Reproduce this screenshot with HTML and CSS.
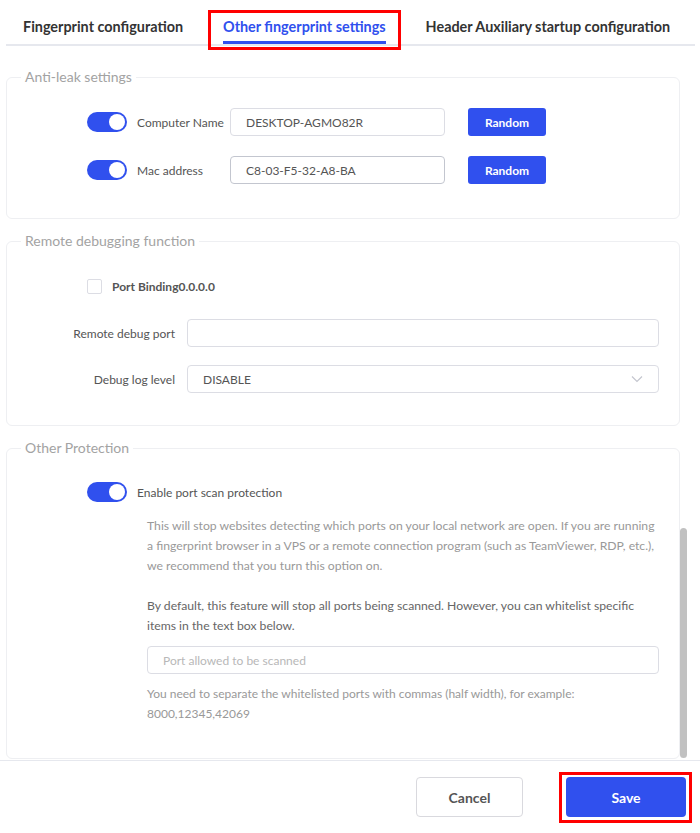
FILE: index.html
```html
<!DOCTYPE html>
<html>
<head>
    <link rel="stylesheet" href="styles.css">
</head>
<body>
    <div class="tabs">
        <div class="tab">Fingerprint configuration</div>
        <div class="tab active">Other fingerprint settings</div>
        <div class="tab">Header Auxiliary startup configuration</div>
    </div>

    <div class="content">
        <div class="sections">
            <fieldset class="group group-leak">
                <legend>Anti-leak settings</legend>
                <div class="leak-row">
                    <span class="switch"></span>
                    <label class="leak-label">Computer Name</label>
                    <input class="text-input leak-input" type="text" value="DESKTOP-AGMO82R">
                    <button class="btn-random">Random</button>
                </div>
                <div class="leak-row">
                    <span class="switch"></span>
                    <label class="leak-label">Mac address</label>
                    <input class="text-input leak-input dark" type="text" value="C8-03-F5-32-A8-BA">
                    <button class="btn-random">Random</button>
                </div>
            </fieldset>

            <fieldset class="group group-debug">
                <legend>Remote debugging function</legend>
                <div class="check-row">
                    <span class="checkbox"></span>
                    <label class="check-label">Port Binding0.0.0.0</label>
                </div>
                <div class="form-row">
                    <label class="form-label">Remote debug port</label>
                    <input class="text-input wide" type="text">
                </div>
                <div class="form-row">
                    <label class="form-label">Debug log level</label>
                    <div class="text-input wide select">
                        <span>DISABLE</span>
                        <svg width="12" height="8" viewBox="0 0 12 8"><path d="M1 1.5 L6 6.5 L11 1.5" fill="none" stroke="#c4c6cf" stroke-width="1.2"/></svg>
                    </div>
                </div>
            </fieldset>

            <fieldset class="group group-other">
                <legend>Other Protection</legend>
                <div class="leak-row">
                    <span class="switch"></span>
                    <label class="leak-label">Enable port scan protection</label>
                </div>
                <div class="protect-body">
                    <p class="hint">This will stop websites detecting which ports on your local network are open. If you are running<br>a fingerprint browser in a VPS or a remote connection program (such as TeamViewer, RDP, etc.),<br>we recommend that you turn this option on.</p>
                    <p class="hint dark">By default, this feature will stop all ports being scanned. However, you can whitelist specific<br>items in the text box below.</p>
                    <input class="text-input port-input" type="text" placeholder="Port allowed to be scanned">
                    <p class="hint note">You need to separate the whitelisted ports with commas (half width), for example:<br>8000,12345,42069</p>
                </div>
            </fieldset>
        </div>
        <div class="scrollbar">
            <div class="thumb"></div>
        </div>
    </div>

    <div class="footer">
        <button class="btn-cancel">Cancel</button>
        <button class="btn-save">Save</button>
    </div>
</body>
</html>
```

FILE: styles.css
```css
body {
    margin: 0;
    font-family: Lato, "Noto Sans", Arial, sans-serif;
    background-color: #fff;
    color: #555;
    width: 700px;
}

.tabs {
    display: flex;
    margin: 0 5px 0 6px;
    padding-left: 17px;
    border-bottom: 2px solid #e6e8ee;
    height: 44px;
}

.tab {
    position: relative;
    padding-top: 16px;
    margin-right: 40px;
    font-size: 14.4px;
    font-weight: 700;
    line-height: 22px;
    color: #333;
    white-space: nowrap;
}

.tab.active {
    color: #3050ee;
}

.tab.active::after {
    content: "";
    display: block;
    height: 3px;
    margin-top: 3px;
    background-color: #3050ee;
}

.tab.active::before {
    content: "";
    position: absolute;
    left: -15px;
    right: -15px;
    top: 10px;
    bottom: -6px;
    border: 3px solid #f00;
}

.content {
    display: flex;
    height: 714px;
    padding-left: 6px;
}

.sections {
    width: 674px;
    padding-top: 21px;
}

.scrollbar {
    width: 7px;
    display: flex;
    flex-direction: column;
}

.thumb {
    margin-top: auto;
    height: 230px;
    margin-bottom: 2px;
    background-color: #c1c1c1;
    border-radius: 4px;
}

.group {
    box-sizing: border-box;
    margin: 0 0 12px 0;
    padding: 0;
    border: 1px solid #eeeff2;
    border-radius: 6px;
}

.group legend {
    margin-left: 14px;
    padding: 0 4px;
    font-size: 14px;
    color: #a3a3a3;
    line-height: 20px;
}

.group-leak {
    height: 152px;
    padding-top: 21px;
}

.group-debug {
    height: 195px;
    padding-top: 27px;
}

.group-other {
    height: 321px;
    padding-top: 20px;
    margin-bottom: 0;
}

.leak-row {
    display: flex;
    align-items: center;
    height: 28px;
    padding-left: 80px;
    margin-bottom: 20px;
}

.group-other .leak-row {
    margin-bottom: 10px;
}

.switch {
    position: relative;
    width: 40px;
    height: 20px;
    border-radius: 10px;
    background-color: #3050ee;
    flex-shrink: 0;
}

.switch::after {
    content: "";
    position: absolute;
    right: 2px;
    top: 2px;
    width: 16px;
    height: 16px;
    border-radius: 50%;
    background-color: #fff;
}

.leak-label {
    width: 93px;
    padding-left: 10px;
    font-size: 12px;
    color: #555;
    white-space: nowrap;
}

.text-input {
    box-sizing: border-box;
    height: 28px;
    border: 1px solid #dcdde4;
    border-radius: 4px;
    padding: 0 15px;
    font-family: inherit;
    font-size: 12px;
    color: #555;
    background-color: #fff;
    outline: none;
}

.text-input.dark {
    border-color: #c3c6cf;
}

.leak-input {
    width: 215px;
}

.btn-random {
    margin-left: 23px;
    width: 78px;
    height: 28px;
    border: none;
    border-radius: 3px;
    background-color: #3050ee;
    color: #fff;
    font-family: inherit;
    font-size: 12px;
    font-weight: 700;
}

.check-row {
    display: flex;
    align-items: center;
    padding-left: 80px;
    height: 16px;
    margin-bottom: 25px;
}

.checkbox {
    box-sizing: border-box;
    width: 15px;
    height: 15px;
    border: 1px solid #dcdde4;
    border-radius: 2px;
}

.check-label {
    margin-left: 10px;
    font-size: 12px;
    font-weight: 700;
    color: #555;
}

.form-row {
    display: flex;
    align-items: center;
    margin-bottom: 18px;
}

.form-label {
    width: 180px;
    padding-right: 12px;
    box-sizing: border-box;
    text-align: right;
    font-size: 12px;
    color: #555;
}

.wide {
    width: 472px;
}

.select {
    display: flex;
    align-items: center;
    justify-content: space-between;
}

.protect-body {
    padding-left: 140px;
    width: 512px;
}

.hint {
    margin: 0 0 20px 0;
    font-size: 12.2px;
    line-height: 20px;
    color: #999;
    white-space: nowrap;
}

.hint.dark {
    color: #666;
    margin-bottom: 10px;
}

.port-input {
    width: 512px;
    margin-bottom: 10px;
}

.port-input::placeholder {
    color: #b8b8b8;
}

.hint.note {
    margin: 0;
    font-size: 12px;
}

.footer {
    display: flex;
    justify-content: flex-end;
    align-items: center;
    gap: 43px;
    height: 72px;
    padding-right: 14px;
    border-top: 1px solid #e6e8ee;
}

.btn-cancel {
    width: 107px;
    height: 40px;
    border: 1px solid #d9d9de;
    border-radius: 4px;
    background-color: #fff;
    color: #555;
    font-family: inherit;
    font-size: 14px;
    font-weight: 700;
}

.btn-save {
    position: relative;
    width: 120px;
    height: 40px;
    border: none;
    border-radius: 4px;
    background-color: #3050ee;
    color: #fff;
    font-family: inherit;
    font-size: 14px;
    font-weight: 700;
}

.btn-save::before {
    content: "";
    position: absolute;
    left: -7px;
    right: -6px;
    top: -5px;
    bottom: -6px;
    border: 3px solid #f00;
}
```
